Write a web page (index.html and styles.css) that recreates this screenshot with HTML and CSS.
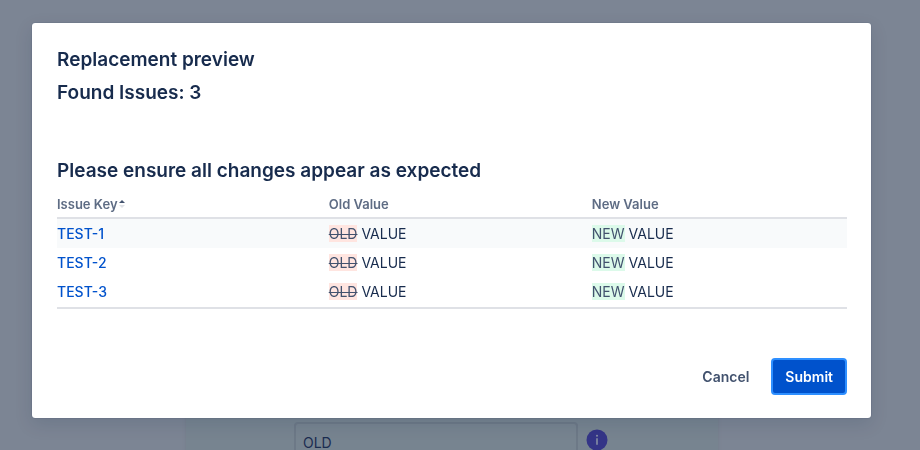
FILE: index.html
```html
<!DOCTYPE html>
<html lang="en">
<head>
<meta charset="utf-8">
<meta name="viewport" content="width=device-width, initial-scale=1">
<title>Replacement preview</title>
<link rel="stylesheet" href="styles.css">
</head>
<body>
<main class="page">
  <form class="panel">
    <input class="field" type="text" value="OLD" aria-label="Find">
    <svg class="info" viewBox="0 0 22 22" aria-hidden="true">
      <circle cx="11" cy="11" r="10.5" fill="#343587"/>
      <circle cx="11" cy="6.7" r="1" fill="#8790a5"/>
      <path d="M11 9.2v6.6" stroke="#8790a5" stroke-width="1.6"/>
    </svg>
  </form>
</main>
<div class="blanket">
  <section class="dialog" role="dialog" aria-modal="true" aria-labelledby="dialog-title">
    <header class="heading-group">
      <h1 class="heading" id="dialog-title">Replacement preview</h1>
      <h2 class="heading">Found Issues: 3</h2>
    </header>
    <h3 class="heading">Please ensure all changes appear as expected</h3>
    <table class="changes">
      <thead>
        <tr>
          <th class="col-key" scope="col" aria-sort="ascending">Issue Key<svg class="sort" viewBox="0 0 8 10" aria-hidden="true"><path d="M1 4 4 1l3 3z" fill="#42526e"/><path d="M1 6h6L4 9z" fill="#dfe1e6"/></svg></th>
          <th class="col-old" scope="col">Old Value</th>
          <th scope="col">New Value</th>
        </tr>
      </thead>
      <tbody>
        <tr class="highlighted">
          <td><a class="issue" href="#test-1">TEST-1</a></td>
          <td><del class="removed">OLD</del> VALUE</td>
          <td><ins class="added">NEW</ins> VALUE</td>
        </tr>
        <tr>
          <td><a class="issue" href="#test-2">TEST-2</a></td>
          <td><del class="removed">OLD</del> VALUE</td>
          <td><ins class="added">NEW</ins> VALUE</td>
        </tr>
        <tr>
          <td><a class="issue" href="#test-3">TEST-3</a></td>
          <td><del class="removed">OLD</del> VALUE</td>
          <td><ins class="added">NEW</ins> VALUE</td>
        </tr>
      </tbody>
    </table>
    <footer class="actions">
      <button class="button" type="button">Cancel</button>
      <button class="button primary" type="button">Submit</button>
    </footer>
  </section>
</div>
</body>
</html>
```
FILE: styles.css
```css
* {
  box-sizing: border-box;
}

body {
  margin: 0;
  background: #7c8594;
  color: #172b4d;
  font: 14px/20px Inter, "Liberation Sans", sans-serif;
  overflow: hidden;
}

.page {
  display: flex;
  justify-content: center;
  min-height: 100vh;
  padding: 40px 16px 0 0;
}

.panel {
  display: flex;
  align-items: flex-start;
  gap: 8px;
  width: 532px;
  padding: 382px 110px 0 108px;
  background: #778490;
  box-shadow: 0 0 3px #727d8a;
}

.field {
  flex: 1;
  min-width: 0;
  height: 40px;
  padding: 0 7px;
  border: 2px solid #6d7987;
  border-radius: 4px;
  background: transparent;
  color: #1b2c50;
  font: inherit;
}

.info {
  flex: none;
  width: 22px;
  height: 22px;
  margin-top: 7px;
}

.blanket {
  position: fixed;
  inset: 0;
  padding: 23px 49px 32px 32px;
}

.dialog {
  padding: 25px 24px 23px 25px;
  border-radius: 3px;
  background: #fff;
  box-shadow: 0 0 1px #091e4299, 0 6px 18px #091e4220;
}

.heading-group {
  margin-bottom: 54px;
}

.heading {
  margin: 0;
  font-size: 19px;
  font-weight: 600;
  line-height: 24px;
}

.heading + .heading {
  margin-top: 9px;
}

.changes {
  width: 100%;
  margin: 8px 0 49px;
  border-collapse: collapse;
  table-layout: fixed;
}

.changes tbody {
  border-top: 2px solid #dfe1e6;
  border-bottom: 2px solid #dfe1e6;
}

.changes th {
  padding: 3px 0;
  color: #5e6c84;
  font-size: 13px;
  font-weight: 600;
  line-height: 20px;
  text-align: left;
}

.changes td {
  padding: 5px 0 4px;
}

.changes tr:last-child td {
  padding-bottom: 5px;
}

.col-key {
  width: 34.4%;
}

.col-old {
  width: 33.3%;
}

.sort {
  width: 8px;
  height: 10px;
}

.highlighted {
  background: #f8fafb;
}

.issue {
  color: #0052cc;
  font-weight: 500;
  text-decoration: none;
}

.removed {
  background: #ffe5e0;
  color: #42526e;
}

.added {
  background: #dcfaea;
  color: #42526e;
  text-decoration: none;
}

.actions {
  display: flex;
  justify-content: flex-end;
  gap: 8px;
}

.button {
  height: 37px;
  padding: 0 12px;
  border: 2px solid transparent;
  border-radius: 4px;
  background: transparent;
  color: #42526e;
  font: 600 14px/20px Inter, "Liberation Sans", sans-serif;
}

.primary {
  border-color: #2e8fff;
  background: #0052cc;
  color: #fff;
}
```
